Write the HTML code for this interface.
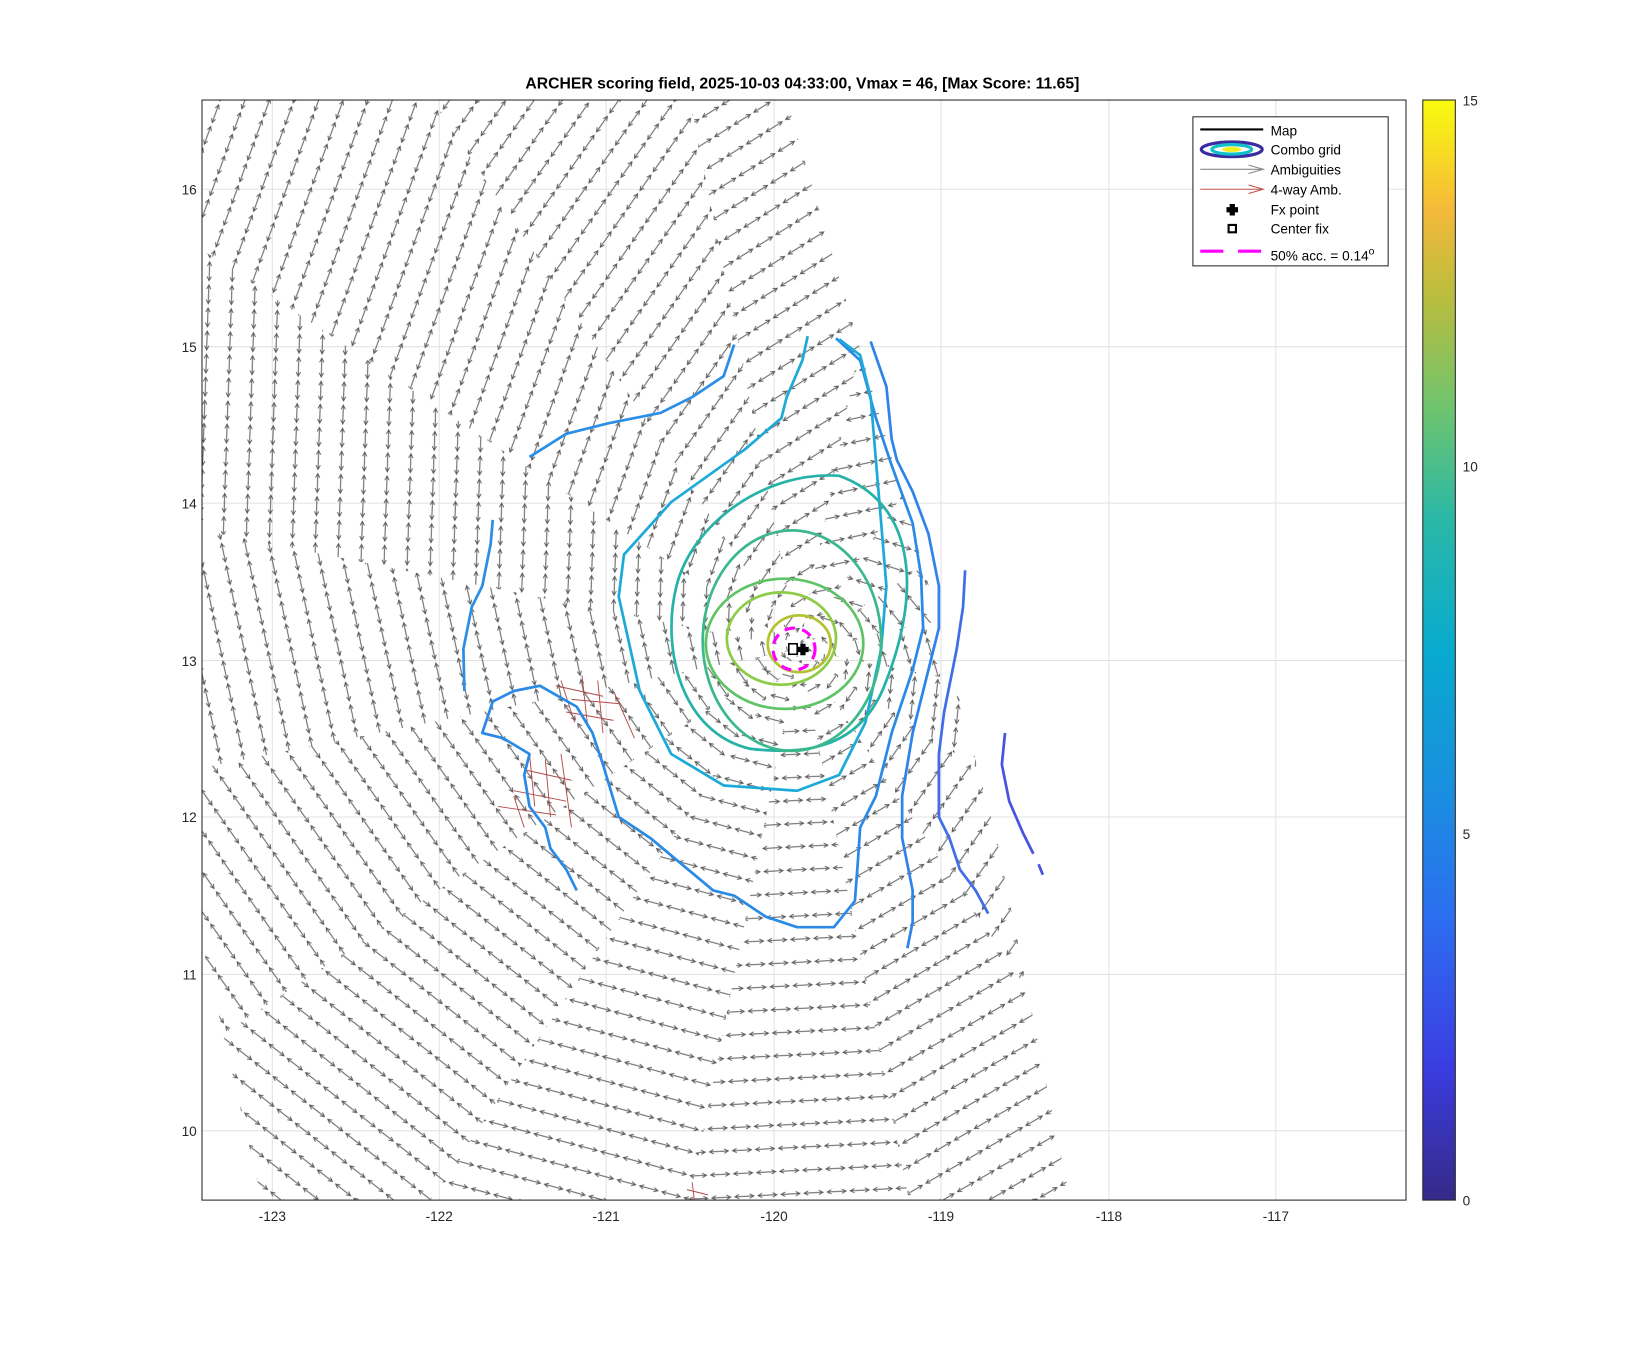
<!DOCTYPE html>
<html><head><meta charset="utf-8"><style>
html,body{margin:0;padding:0;background:#fff;width:1646px;height:1350px;overflow:hidden;}
svg{display:block;font-family:"Liberation Sans",sans-serif;overflow:hidden;}
</style></head><body>
<svg width="1646" height="1350" viewBox="0 0 1646 1350" xmlns="http://www.w3.org/2000/svg">
<defs>
<linearGradient id="par" x1="0" y1="1" x2="0" y2="0">
<stop offset="0" stop-color="#352a87"/><stop offset="0.12" stop-color="#3b3ce0"/><stop offset="0.25" stop-color="#2d6cf0"/><stop offset="0.37" stop-color="#1a8ee0"/><stop offset="0.5" stop-color="#08aacf"/><stop offset="0.62" stop-color="#2ab8a6"/><stop offset="0.72" stop-color="#6fc46e"/><stop offset="0.82" stop-color="#b8bd3e"/><stop offset="0.9" stop-color="#f5b93a"/><stop offset="1" stop-color="#f9fb0e"/>
</linearGradient>
<clipPath id="ax"><rect x="193" y="97" width="1147" height="1048"/></clipPath>
<clipPath id="sw"><polygon points="193,97 750,97 810,300 880,540 950,800 1020,1145 250,1145 193,900"/></clipPath>
<g id="ar"><path d="M2,11 L20,11 M16,9 L20,11 L16,13 M6,9 L2,11 L6,13" fill="none" stroke="#5a5a5a" stroke-width="0.9"/></g>
<pattern id="p0" width="22" height="22" patternUnits="userSpaceOnUse" patternTransform="rotate(-106.7)"><use href="#ar"/></pattern>
<pattern id="p1" width="22" height="22" patternUnits="userSpaceOnUse" patternTransform="rotate(-84)"><use href="#ar"/></pattern>
<pattern id="p2" width="22" height="22" patternUnits="userSpaceOnUse" patternTransform="rotate(-55)"><use href="#ar"/></pattern>
<pattern id="p3" width="22" height="22" patternUnits="userSpaceOnUse" patternTransform="rotate(-30)"><use href="#ar"/></pattern>
<pattern id="p4" width="22" height="22" patternUnits="userSpaceOnUse" patternTransform="rotate(-3)"><use href="#ar"/></pattern>
<pattern id="p5" width="22" height="22" patternUnits="userSpaceOnUse" patternTransform="rotate(15)"><use href="#ar"/></pattern>
<pattern id="p6" width="22" height="22" patternUnits="userSpaceOnUse" patternTransform="rotate(38)"><use href="#ar"/></pattern>
<pattern id="p7" width="22" height="22" patternUnits="userSpaceOnUse" patternTransform="rotate(55)"><use href="#ar"/></pattern>
<pattern id="p8" width="22" height="22" patternUnits="userSpaceOnUse" patternTransform="rotate(78)"><use href="#ar"/></pattern>
<pattern id="p9" width="22" height="22" patternUnits="userSpaceOnUse" patternTransform="rotate(92)"><use href="#ar"/></pattern>
<pattern id="p10" width="22" height="22" patternUnits="userSpaceOnUse" patternTransform="rotate(110)"><use href="#ar"/></pattern>
<pattern id="p11" width="22" height="22" patternUnits="userSpaceOnUse" patternTransform="rotate(125)"><use href="#ar"/></pattern>
<pattern id="p12" width="22" height="22" patternUnits="userSpaceOnUse" patternTransform="rotate(148)"><use href="#ar"/></pattern>
<pattern id="p13" width="22" height="22" patternUnits="userSpaceOnUse" patternTransform="rotate(168)"><use href="#ar"/></pattern>
<pattern id="p14" width="22" height="22" patternUnits="userSpaceOnUse" patternTransform="rotate(198)"><use href="#ar"/></pattern>
<pattern id="p15" width="22" height="22" patternUnits="userSpaceOnUse" patternTransform="rotate(230)"><use href="#ar"/></pattern>
</defs>
<g transform="translate(-0.6,-1.8) scale(1.0497)">
<text x="765" y="86" font-size="15" font-weight="bold" text-anchor="middle">ARCHER scoring field, 2025-10-03 04:33:00, Vmax = 46, [Max Score: 11.65]</text>
<g stroke="#e2e2e2" stroke-width="1">
<line x1="260" y1="97" x2="260" y2="1145"/><line x1="419" y1="97" x2="419" y2="1145"/><line x1="578" y1="97" x2="578" y2="1145"/><line x1="738" y1="97" x2="738" y2="1145"/><line x1="897" y1="97" x2="897" y2="1145"/><line x1="1057" y1="97" x2="1057" y2="1145"/><line x1="1216" y1="97" x2="1216" y2="1145"/>
<line x1="193" y1="182" x2="1340" y2="182"/><line x1="193" y1="332" x2="1340" y2="332"/><line x1="193" y1="481" x2="1340" y2="481"/><line x1="193" y1="631" x2="1340" y2="631"/><line x1="193" y1="780" x2="1340" y2="780"/><line x1="193" y1="930" x2="1340" y2="930"/><line x1="193" y1="1079" x2="1340" y2="1079"/>
</g>
<g clip-path="url(#sw)">
<g stroke="none">
<polygon fill="url(#p0)" points="762,620 2234,327 2234,913"/>
<polygon fill="url(#p1)" points="762,620 2234,913 2009,1454"/>
<polygon fill="url(#p2)" points="762,620 2009,1454 1596,1867"/>
<polygon fill="url(#p3)" points="762,620 1596,1867 1055,2092"/>
<polygon fill="url(#p4)" points="762,620 1055,2092 469,2092"/>
<polygon fill="url(#p5)" points="762,620 469,2092 -72,1867"/>
<polygon fill="url(#p6)" points="762,620 -72,1867 -485,1454"/>
<polygon fill="url(#p7)" points="762,620 -485,1454 -710,913"/>
<polygon fill="url(#p8)" points="762,620 -710,913 -710,327"/>
<polygon fill="url(#p9)" points="762,620 -710,327 -485,-214"/>
<polygon fill="url(#p10)" points="762,620 -485,-214 -72,-627"/>
<polygon fill="url(#p11)" points="762,620 -72,-627 469,-852"/>
<polygon fill="url(#p12)" points="762,620 469,-852 1055,-852"/>
<polygon fill="url(#p13)" points="762,620 1055,-852 1596,-627"/>
<polygon fill="url(#p14)" points="762,620 1596,-627 2009,-214"/>
<polygon fill="url(#p15)" points="762,620 2009,-214 2234,327"/>
</g>
<path d="M530,655 L575,665 M545,668 L590,672 M540,680 L585,688 M555,645 L560,690 M570,650 L575,700 M585,660 L605,705 M535,650 L548,690 M500,735 L545,745 M490,755 L540,765 M475,770 L530,778 M505,720 L510,770 M520,725 L525,780 M535,720 L545,790 M490,760 L500,790 M655,1135 L675,1140 M660,1128 L662,1145" fill="none" stroke="#b04a4a" stroke-width="0.9"/>
</g>
<g fill="none" stroke-width="2.6" stroke-linejoin="round" clip-path="url(#ax)">
<path stroke="#2b8fe5" d="M470,497 L468,520 460,560 450,580 442,620 443,660"/>
<path stroke="#2b8fe5" d="M505,437 L540,415 580,405 630,395 660,380 690,360 700,330"/>
<path stroke="#2a8ae6" d="M550,850 L540,830 525,810 520,790 505,770 500,740 505,720 480,705 460,700 470,670 490,660 515,655 550,675 565,700 575,730 590,780 620,800 650,825 680,850 700,855 730,875 760,885 795,885 815,860 818,820 820,790 835,760 850,700 870,640 880,600 878,550 870,500 850,445 835,400 820,345 797,324"/>
<path stroke="#2f84ea" d="M830,327 L845,370 850,420 855,440 870,470 885,510 895,560 895,600 885,640 870,700 860,760 860,800 870,850 870,880 865,905"/>
<path stroke="#3f6ee8" d="M920,545 L918,580 912,620 900,680 895,720 895,780 905,800 915,830 930,850 942,872"/>
<path stroke="#4a52e0" d="M958,700 L955,730 962,765 975,795 985,815 M990,825 L994,835"/>
<path stroke="#1eaad8" d="M770,322 L765,345 750,380 745,400 710,430 640,480 595,530 590,570 610,660 640,720 690,750 760,755 800,740 825,690 840,620 845,560 840,500 835,440 830,380 820,340 800,325"/>
<path stroke="#27b2a8" d="M800,455 C870,480 880,560 845,650 C820,720 760,720 715,715 C650,700 630,620 645,560 C660,500 730,450 800,455 Z"/>
<ellipse stroke="#3cb88a" cx="755" cy="612" rx="85" ry="105"/>
<ellipse stroke="#5ec466" cx="748" cy="615" rx="75" ry="62"/>
<ellipse stroke="#8dcc47" cx="745" cy="610" rx="52" ry="44"/>
<ellipse stroke="#b4c331" cx="762" cy="615" rx="30" ry="27"/>
<circle stroke="#ff00ff" stroke-width="3" stroke-dasharray="10,7" cx="757" cy="620" r="20"/>
</g>
<rect x="752" y="615" width="8" height="10" fill="#fff" stroke="#000" stroke-width="1.5"/>
<path d="M763,615 h5 v3 h3 v5 h-3 v3 h-5 v-3 h-3 v-5 h3 z" fill="#000"/>
<rect x="193" y="97" width="1147" height="1048" fill="none" stroke="#262626" stroke-width="1"/>
<g font-size="13" fill="#262626" text-anchor="middle">
<text x="260" y="1165">-123</text><text x="419" y="1165">-122</text><text x="578" y="1165">-121</text><text x="738" y="1165">-120</text><text x="897" y="1165">-119</text><text x="1057" y="1165">-118</text><text x="1216" y="1165">-117</text>
</g>
<g font-size="13" fill="#262626" text-anchor="end">
<text x="188" y="187">16</text><text x="188" y="337">15</text><text x="188" y="486">14</text><text x="188" y="636">13</text><text x="188" y="785">12</text><text x="188" y="935">11</text><text x="188" y="1084">10</text>
</g>
<rect x="1356" y="97" width="31" height="1048" fill="url(#par)" stroke="#262626" stroke-width="1"/>
<g font-size="13" fill="#262626">
<text x="1394" y="102">15</text><text x="1394" y="451">10</text><text x="1394" y="801">5</text><text x="1394" y="1150">0</text>
</g>
<rect x="1137" y="113" width="186" height="142" fill="#fff" stroke="#262626" stroke-width="1"/>
<g font-size="13" fill="#000">
<line x1="1144" y1="125" x2="1204" y2="125" stroke="#000" stroke-width="2"/><text x="1211" y="131">Map</text>
<ellipse cx="1174" cy="144" rx="29" ry="7" fill="none" stroke="#3a2ba0" stroke-width="3"/><ellipse cx="1174" cy="144" rx="19" ry="4.5" fill="none" stroke="#10c0c8" stroke-width="3"/><ellipse cx="1174" cy="144" rx="9" ry="2.5" fill="#f0f020"/><text x="1211" y="149">Combo grid</text>
<line x1="1144" y1="163" x2="1204" y2="163" stroke="#888" stroke-width="1"/><path d="M1190,159 L1204,163 1190,167" fill="none" stroke="#888"/><text x="1211" y="168">Ambiguities</text>
<line x1="1144" y1="182" x2="1204" y2="182" stroke="#c05050" stroke-width="1"/><path d="M1190,178 L1204,182 1190,186" fill="none" stroke="#c05050"/><text x="1211" y="187">4-way Amb.</text>
<path d="M1172,196 h5 v3 h3 v5 h-3 v3 h-5 v-3 h-3 v-5 h3 z" fill="#000"/><text x="1211" y="206">Fx point</text>
<rect x="1171" y="216" width="7" height="7" fill="#fff" stroke="#000" stroke-width="2"/><text x="1211" y="224">Center fix</text>
<line x1="1144" y1="241" x2="1204" y2="241" stroke="#ff00ff" stroke-width="3" stroke-dasharray="22,14"/><text x="1211" y="250">50% acc. = 0.14<tspan dy="-6" font-size="10">o</tspan></text>
</g>
</g>
</svg>
</body></html>
